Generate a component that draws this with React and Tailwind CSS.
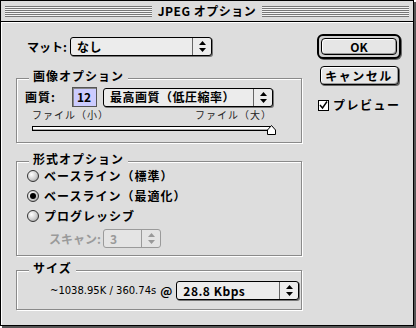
import React from "react";

const jp = { fontFamily: '"Noto Sans CJK JP", "Noto Sans", sans-serif' };

function Arrows({ disabled }) {
  const c = disabled ? "#999" : "#000";
  return (
    <svg width="7" height="11" viewBox="0 0 7 11">
      <path d="M3.5 0 L7 4 L0 4 Z" fill={c} />
      <path d="M0 7 L7 7 L3.5 11 Z" fill={c} />
    </svg>
  );
}

function Popup({ className, children, disabled }) {
  return (
    <div
      className={
        disabled
          ? `flex h-[19px] shrink-0 rounded-[3px] border border-[#9a9a9a] bg-[#e4e4e4] text-[#9a9a9a] ${className}`
          : `flex h-[19px] shrink-0 rounded-[3px] border border-black bg-[#ececec] shadow-[1px_1px_0_#777] ${className}`
      }
    >
      <div className="flex flex-1 items-center whitespace-nowrap pl-[6px] text-[12px] font-bold leading-none tracking-[0.5px]">{children}</div>
      <div
        className={
          disabled
            ? "flex w-[19px] items-center justify-center border-l border-[#9a9a9a]"
            : "flex w-[19px] items-center justify-center border-l border-[#666]"
        }
      >
        <Arrows disabled={disabled} />
      </div>
    </div>
  );
}

function Group({ title, className, children }) {
  return (
    <div className={`relative border border-[#8a8a8a] shadow-[1px_1px_0_#fff,inset_1px_1px_0_#fff] ${className}`}>
      <span className="absolute left-[12px] top-[-9px] whitespace-nowrap bg-[#dddddd] px-[4px] text-[12px] font-bold leading-[11px] tracking-[1px]">
        {title}
      </span>
      {children}
    </div>
  );
}

function Radio({ on, label }) {
  return (
    <div className="flex h-[20px] items-center">
      <div className="flex h-[12px] w-[12px] items-center justify-center rounded-full border border-[#333] bg-[radial-gradient(circle_at_35%_35%,#ffffff,#cfcfcf_55%,#8c8c8c)]">
        {on && <div className="h-[6px] w-[6px] rounded-full bg-black" />}
      </div>
      <span className="ml-[5px] whitespace-nowrap text-[12px] font-bold leading-none tracking-[1px]">{label}</span>
    </div>
  );
}

export default function App() {
  return (
    <div className="h-[328px] w-[416px] bg-white" style={jp}>
      <div className="flex h-[326px] w-[414px] flex-col border border-black bg-[#dddddd] text-black shadow-[2px_2px_0_#555]">
        {/* title bar */}
        <div className="flex h-[21px] shrink-0 items-center border-b border-black bg-[#dddddd] px-[4px]">
          <div className="h-[11px] flex-1 bg-[repeating-linear-gradient(to_bottom,#777_0px,#777_1px,#f4f4f4_1px,#f4f4f4_2px)]" />
          <span className="whitespace-nowrap px-[6px] text-[12px] font-bold leading-none tracking-[0.5px]">JPEG オプション</span>
          <div className="h-[11px] flex-1 bg-[repeating-linear-gradient(to_bottom,#777_0px,#777_1px,#f4f4f4_1px,#f4f4f4_2px)]" />
        </div>

        <div className="flex flex-1 border-l border-t border-white">
          {/* left column */}
          <div className="ml-[14px] w-[286px]">
            <div className="mt-[14px] flex items-center pl-[11px]">
              <span className="w-[43px] shrink-0 whitespace-nowrap text-[12px] font-bold leading-none">マット:</span>
              <Popup className="w-[142px]">なし</Popup>
            </div>

            <Group title="画像オプション" className="mt-[22px] h-[65px]">
              <div className="mt-[8px] flex items-center pl-[8px]">
                <span className="w-[47px] shrink-0 whitespace-nowrap text-[12px] font-bold leading-none tracking-[1px]">画質:</span>
                <div className="flex h-[20px] w-[25px] items-center border border-[#555] bg-[#ccccff] pl-[4px] text-[12px] font-bold leading-none shadow-[inset_1px_1px_0_#888]">
                  12
                </div>
                <Popup className="ml-[6px] w-[170px]">最高画質（低圧縮率）</Popup>
              </div>
              <div className="ml-[15px] mt-[2px] w-[244px]">
                <div className="flex justify-between whitespace-nowrap text-[10px] leading-[12px] tracking-[1px] text-[#222]">
                  <span>ファイル（小）</span>
                  <span className="mr-[4px]">ファイル（大）</span>
                </div>
                <div className="flex items-center">
                  <div className="h-[5px] flex-1 border border-black bg-white shadow-[inset_-1px_-1px_0_#aaa]" />
                  <svg width="9" height="10" viewBox="0 0 9 10" className="-ml-[4px] mt-[4px]">
                    <path d="M4.5 0.5 L8.5 5 L8.5 9.5 L0.5 9.5 L0.5 5 Z" fill="#fff" stroke="#000" />
                  </svg>
                </div>
              </div>
            </Group>

            <Group title="形式オプション" className="mt-[18px] h-[95px]">
              <div className="mt-[4px] flex flex-col pl-[10px]">
                <Radio label="ベースライン（標準）" />
                <Radio on label="ベースライン（最適化）" />
                <Radio label="プログレッシブ" />
              </div>
              <div className="mt-[3px] flex items-center pl-[32px] text-[#9a9a9a]">
                <span className="w-[54px] shrink-0 whitespace-nowrap text-[12px] font-bold leading-none">スキャン:</span>
                <Popup disabled className="w-[58px]">3</Popup>
              </div>
            </Group>

            <Group title="サイズ" className="mt-[14px] h-[40px]">
              <div className="mt-[10px] flex items-center pl-[33px]">
                <span className="whitespace-nowrap text-[10px] leading-none" style={{ fontFamily: '"DejaVu Sans", sans-serif' }}>
                  ~1038.95K / 360.74s
                </span>
                <span className="ml-[4px] text-[12px] font-bold leading-none">@</span>
                <Popup className="ml-[4px] w-[123px]">28.8 Kbps</Popup>
              </div>
            </Group>
          </div>

          {/* right column */}
          <div className="ml-[14px] flex w-[86px] flex-col items-center">
            <div className="mt-[11px] rounded-[6px] border-[2px] border-black bg-[#cfcfcf] p-[2px] shadow-[1px_1px_0_#666]">
              <div className="flex h-[17px] w-[76px] items-center justify-center rounded-[4px] border border-black bg-[#e6e6e6] text-[12px] font-bold leading-none shadow-[inset_1px_1px_0_#fff,inset_-1px_-1px_0_#999]">
                OK
              </div>
            </div>
            <div className="mt-[7px] flex h-[19px] w-[79px] items-center justify-center whitespace-nowrap rounded-[4px] border border-black bg-[#e6e6e6] text-[12px] font-bold leading-none tracking-[1.5px] shadow-[inset_1px_1px_0_#fff,inset_-1px_-1px_0_#999,1px_1px_0_#666]">
              キャンセル
            </div>
            <div className="mt-[14px] flex items-center self-start pl-[2px]">
              <div className="flex h-[11px] w-[11px] items-center justify-center border border-black bg-white">
                <svg width="9" height="9" viewBox="0 0 9 9">
                  <path d="M1 4 L3.5 7 L8 0.5" fill="none" stroke="#000" strokeWidth="1.4" />
                </svg>
              </div>
              <span className="ml-[4px] whitespace-nowrap text-[12px] font-bold leading-none tracking-[1.5px]">プレビュー</span>
            </div>
          </div>
        </div>
      </div>
    </div>
  );
}
